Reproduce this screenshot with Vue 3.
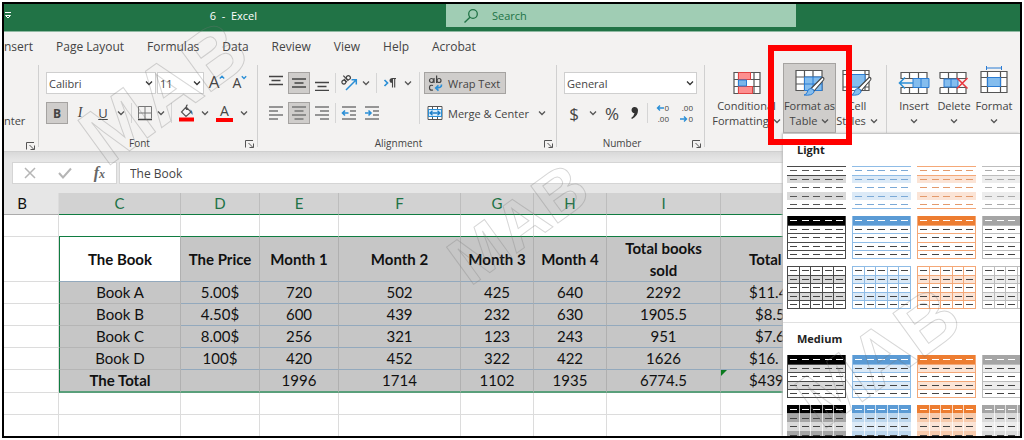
<script setup>
const tabs = ['nsert', 'Page Layout', 'Formulas', 'Data', 'Review', 'View', 'Help', 'Acrobat']

const columns = [
  { name: 'B', cls: 'cb' },
  { name: 'C', cls: 'cc' },
  { name: 'D', cls: 'cd' },
  { name: 'E', cls: 'cd' },
  { name: 'F', cls: 'cc' },
  { name: 'G', cls: 'cg' },
  { name: 'H', cls: 'cg' },
  { name: 'I', cls: 'ci' },
  { name: '', cls: 'cj' }
]

const heads = ['The Book', 'The Price', 'Month 1', 'Month 2', 'Month 3', 'Month 4', 'Total books sold', 'Total']

const books = [
  ['Book A', '5.00$', '720', '502', '425', '640', '2292', '$11.4'],
  ['Book B', '4.50$', '600', '439', '232', '630', '1905.5', '$8.5'],
  ['Book C', '8.00$', '256', '321', '123', '243', '951', '$7.6'],
  ['Book D', '100$', '420', '452', '322', '422', '1626', '$16.'],
  ['The Total', '', '1996', '1714', '1102', '1935', '6774.5', '$439']
]

const palette = [
  { name: 'Black', main: '#000000', line: '#4a4a4a', soft: '#d9d9d9', mid: '#a6a6a6', dash: '#555555' },
  { name: 'Blue', main: '#5b9bd5', line: '#8fbce6', soft: '#dceaf7', mid: '#bdd7ee', dash: '#7ba9d6' },
  { name: 'Orange', main: '#ed7d31', line: '#f4a878', soft: '#fbe4d6', mid: '#f8cbad', dash: '#e39a6c' },
  { name: 'Gray', main: '#a5a5a5', line: '#bdbdbd', soft: '#ededed', mid: '#dbdbdb', dash: '#aaaaaa' }
]

const sections = [
  { title: 'Light', kinds: ['lines', 'boxed', 'grid'] },
  { title: 'Medium', kinds: ['banded', 'tiled'] }
]

const rowsY = [0, 9, 17, 26, 34]
const solid = (k) => k === 'boxed' || k === 'banded' || k === 'tiled'

function bandFill(kind, c, r) {
  if (r === 0) return solid(kind) ? c.main : '#ffffff'
  if (kind === 'boxed') return '#ffffff'
  if (kind === 'tiled') return r % 2 ? c.mid : c.soft
  return r % 2 ? c.soft : '#ffffff'
}
function dashColor(kind, c, r) {
  if (r === 0 && solid(kind)) return '#ffffff'
  return kind === 'lines' ? c.dash : '#444444'
}
</script>

<template>
  <main class="window">
    <header class="titlebar">
      <div class="title">
        <svg class="qat" width="8" height="9" viewBox="0 0 8 9"><path d="M1 1.500h6M1.500 4.500 4 7l2.500-2.500z" fill="none" stroke="#fff" /></svg>
        <span>6&nbsp; - &nbsp;Excel</span>
      </div>
      <label class="search">
        <svg width="16" height="16" viewBox="0 0 16 16"><circle cx="10" cy="6" r="4.300" fill="none" stroke="#217346" stroke-width="1.300" /><path d="M7 9.200 1.500 14.500" stroke="#217346" stroke-width="1.400" /></svg>
        <input type="text" placeholder="Search" aria-label="Search" />
      </label>
    </header>

    <nav class="tabs">
      <a v-for="t in tabs" :key="t" href="#">{{ t }}</a>
    </nav>

    <section class="ribbon">
      <div class="group clip">
        <div class="painter">nter</div>
        <footer><span></span><svg class="launch" viewBox="0 0 10 10"><path d="M.5 8.500V1.500H8M3.500 4l4.500 4.500M8.500 4.500v4h-4" /></svg></footer>
      </div>

      <div class="group font">
        <div class="bar top">
          <span class="combo family"><select aria-label="Font"><option>Calibri</option></select><svg class="chev" viewBox="0 0 8 6"><path d="M1 1.500 4 4.500l3-3" /></svg></span>
          <span class="combo size"><select aria-label="Font size"><option>11</option></select><svg class="chev" viewBox="0 0 8 6"><path d="M1 1.500 4 4.500l3-3" /></svg></span>
          <button class="w24 grow" aria-label="Increase font size">A<svg width="6" height="5" viewBox="0 0 6 5"><path d="M.8 3.500 3 1.300l2.200 2.200" fill="none" stroke="#2b8fd6" stroke-width="1.400" /></svg></button>
          <button class="w20 shrink" aria-label="Decrease font size">A<svg width="6" height="5" viewBox="0 0 6 5"><path d="M.8 1.200 3 3.400l2.200-2.200" fill="none" stroke="#2b8fd6" stroke-width="1.400" /></svg></button>
        </div>
        <div class="bar">
          <button class="w22 on"><b>B</b></button>
          <button class="w22"><i>I</i></button>
          <button class="w22"><u>U</u></button>
          <button class="w12" aria-label="Underline options"><svg class="chev" viewBox="0 0 8 6"><path d="M1 1.500 4 4.500l3-3" /></svg></button>
          <hr />
          <button class="w18" aria-label="Borders"><svg width="16" height="16" viewBox="0 0 16 16"><path d="M1.500 1.500h13v12M1.500 1.500v12M8 2v12M2 8h12" fill="none" stroke="#777" /><path d="M1 14.500h14" stroke="#444" stroke-width="1.500" /></svg></button>
          <button class="w12" aria-label="Border options"><svg class="chev" viewBox="0 0 8 6"><path d="M1 1.500 4 4.500l3-3" /></svg></button>
          <hr />
          <button class="w22" aria-label="Fill color"><svg width="18" height="18" viewBox="0 0 18 18"><path d="M8 3 13 8 8 12.500 3.500 8zM8.500 6V2q0-1 1.200-1" fill="#f7f7f7" stroke="#555" stroke-width="1.200" /><path d="M12 5.500q3 1 2.500 5.500-2-2-1.500-3.500z" fill="#2b6ca3" /><path d="M1 13.500h15v4H1z" fill="#f00" /></svg></button>
          <button class="w12" aria-label="Fill options"><svg class="chev" viewBox="0 0 8 6"><path d="M1 1.500 4 4.500l3-3" /></svg></button>
          <button class="w24 ink" aria-label="Font color">A</button>
          <button class="w12" aria-label="Font color options"><svg class="chev" viewBox="0 0 8 6"><path d="M1 1.500 4 4.500l3-3" /></svg></button>
        </div>
        <footer><span>Font</span><svg class="launch" viewBox="0 0 10 10"><path d="M.5 8.500V1.500H8M3.500 4l4.500 4.500M8.500 4.500v4h-4" /></svg></footer>
      </div>

      <div class="group align">
        <div class="pair">
          <div class="stack">
            <div class="bar top">
              <button class="w22" aria-label="Top align"><svg class="ln" viewBox="0 0 16 16"><path d="M1 1.500h14M3.500 5.500h9M1 9.500h14" /></svg></button>
              <button class="w22 on" aria-label="Middle align"><svg class="ln" viewBox="0 0 16 16"><path d="M1 4h14M3.500 8h9M1 12h14" /></svg></button>
              <button class="w22" aria-label="Bottom align"><svg class="ln" viewBox="0 0 16 16"><path d="M1 7.500h14M3.500 11.500h9M1 15.500h14" /></svg></button>
              <hr class="tight" />
              <button class="w20" aria-label="Orientation"><svg width="18" height="18" viewBox="0 0 18 18"><g transform="rotate(-45 6 6)" fill="none" stroke="#444" stroke-width="1.200"><circle cx="3" cy="6" r="2" /><path d="M5.200 3.800v4.400M7.200 1v7.200" /><circle cx="9.300" cy="6" r="2" /></g><path d="M6 16 16 6M11.500 5.700H16.300V10.500" fill="none" stroke="#2b8fd6" stroke-width="1.500" /></svg></button>
              <button class="w12" aria-label="Orientation options"><svg class="chev" viewBox="0 0 8 6"><path d="M1 1.500 4 4.500l3-3" /></svg></button>
              <hr />
              <button class="w18" aria-label="Text direction"><svg width="14" height="12" viewBox="0 0 14 12"><path d="M1.500 3 4.500 6l-3 3" fill="none" stroke="#2b8fd6" stroke-width="1.700" /><path d="M9.500 1.500v9M11.700 1.500v9M13 1.500H9" fill="none" stroke="#444" stroke-width="1.100" /><path d="M9.500 1Q6.500 1 6.500 3.500T9.500 6z" fill="#444" /></svg></button>
              <button class="w16" aria-label="Direction options"><svg class="chev" viewBox="0 0 8 6"><path d="M1 1.500 4 4.500l3-3" /></svg></button>
            </div>
            <div class="bar">
              <button class="w22" aria-label="Align left"><svg class="ln dim" viewBox="0 0 16 16"><path d="M1 2h14M1 6h9M1 10h14M1 14h9" /></svg></button>
              <button class="w22 on" aria-label="Center"><svg class="ln dim" viewBox="0 0 16 16"><path d="M1 2h14M3.500 6h9M1 10h14M3.500 14h9" /></svg></button>
              <button class="w22" aria-label="Align right"><svg class="ln dim" viewBox="0 0 16 16"><path d="M1 2h14M6 6h9M1 10h14M6 14h9" /></svg></button>
              <hr class="tight" />
              <button class="w20" aria-label="Decrease indent"><svg class="ln dim" viewBox="0 0 16 16"><path d="M1 2h14M9 6h6M9 10h6M1 14h14" /><path class="blue" d="M7.500 8H1.500M4 5.500 1.500 8 4 10.500" /></svg></button>
              <button class="w24" aria-label="Increase indent"><svg class="ln dim" viewBox="0 0 16 16"><path d="M1 2h14M9 6h6M9 10h6M1 14h14" /><path class="blue" d="M1 8h6M4.500 5.500 7 8 4.500 10.500" /></svg></button>
            </div>
          </div>
          <div class="stack wide">
            <button class="wrap on"><svg width="15" height="17" viewBox="0 0 15 17"><g fill="none" stroke="#444" stroke-width="1.200"><circle cx="3.500" cy="5.500" r="2" /><path d="M6 3v5M8.600.5V8" /><circle cx="11" cy="5.500" r="2" /><path d="M5 10.500Q1.500 9.500 1.500 12.700T5 15" /></g><path d="M13.500 9.500Q14 13 8 13M10.500 10.300 7.700 13l2.800 2.700" fill="none" stroke="#2b8fd6" stroke-width="1.600" /></svg>Wrap Text</button>
            <button class="merge"><svg width="16" height="16" viewBox="0 0 16 16"><path d="M1 1.500h14v13H1zM1 4.500h14M1 11.500h14M5.500 1v3.500M10.500 1v3.500M5.500 11.500V15M10.500 11.500V15" fill="#fff" stroke="#555" /><path d="M1.500 4.500h13v7h-13z" fill="#d9ecfa" stroke="#2b8fd6" /><path d="M3 8h10M5.500 5.700 3 8l2.500 2.300M10.500 5.700 13 8l-2.500 2.300" fill="none" stroke="#1e7fc9" stroke-width="1.300" /></svg>Merge &amp; Center<svg class="chev" viewBox="0 0 8 6"><path d="M1 1.500 4 4.500l3-3" /></svg></button>
          </div>
        </div>
        <footer><span>Alignment</span><svg class="launch" viewBox="0 0 10 10"><path d="M.5 8.500V1.500H8M3.500 4l4.500 4.500M8.500 4.500v4h-4" /></svg></footer>
      </div>

      <div class="group number">
        <div class="bar top">
          <span class="combo format"><select aria-label="Number format"><option>General</option></select><svg class="chev" viewBox="0 0 8 6"><path d="M1 1.500 4 4.500l3-3" /></svg></span>
        </div>
        <div class="bar">
          <button class="w20 sign">$</button>
          <button class="w16" aria-label="Currency options"><svg class="chev" viewBox="0 0 8 6"><path d="M1 1.500 4 4.500l3-3" /></svg></button>
          <button class="w20 sign">%</button>
          <button class="w22" aria-label="Comma style"><svg width="9" height="14" viewBox="0 0 9 14"><path d="M4 1a3.300 3.300 0 0 1 4 3.500Q8 10 2 13l-.8-1Q4 10 4.500 7.300A3.200 3.200 0 0 1 4 1z" fill="#333" /></svg></button>
          <hr class="tight" />
          <button class="w18 dec"><svg width="8" height="8" viewBox="0 0 8 8"><path d="M8 4H1.500M4 1.500 1.500 4 4 6.500" fill="none" stroke="#2b8fd6" stroke-width="1.400" /></svg><span>0</span><span class="full">.00</span></button>
          <button class="w18 dec next"><span class="full">.00</span><svg width="8" height="8" viewBox="0 0 8 8"><path d="M0 4h6.500M4 1.500 6.500 4 4 6.500" fill="none" stroke="#2b8fd6" stroke-width="1.400" /></svg><span>0</span></button>
        </div>
        <footer><span>Number</span><svg class="launch" viewBox="0 0 10 10"><path d="M.5 8.500V1.500H8M3.500 4l4.500 4.500M8.500 4.500v4h-4" /></svg></footer>
      </div>

      <div class="group styles">
        <button class="big cond">
          <svg width="28" height="24" viewBox="0 0 28 24"><path d="M1 1.500h26v21H1zM1 8.500h26M1 15.500h26M5.500 1.500v21M21 1.500v21" fill="#fff" stroke="#555" stroke-width="1.200" /><path d="M5.500 1.500h12v7h-12zM5.500 15.500h14v7h-14z" fill="#fd8f8f" stroke="#e04343" /><path d="M5.500 9h8v6h-8z" fill="#7ab6ea" stroke="#2b7cd3" /></svg>
          <span>Conditional</span><span>Formatting<svg class="chev" viewBox="0 0 8 6"><path d="M1 1.500 4 4.500l3-3" /></svg></span>
        </button>
        <button class="big fat on">
          <svg width="30" height="28" viewBox="0 0 30 28"><path d="M1 1.500h26v20H1zM1 8h26M1 15h26M9.500 1.500v20M18 1.500v20" fill="#fff" stroke="#555" stroke-width="1.200" /><path d="M9.500 8H27v13.500H9.500z" fill="#84bdee" stroke="#2b7cd3" /><path d="M9.500 15H27M18 8v13.500" stroke="#2b7cd3" /><path d="M28 8.500q1.500 1 .5 2.500L19 22l-3-2.500L26.500 9q.8-.9 1.500-.5z" fill="#fff" stroke="#444" stroke-width="1.100" /><path d="M16 19.500q3.500.5 3 3.500-2 4-10 3 3-.8 3.300-3 .7-3.500 3.700-3.500z" fill="#84bdee" stroke="#2b7cd3" /></svg>
          <span>Format as</span><span>Table<svg class="chev" viewBox="0 0 8 6"><path d="M1 1.500 4 4.500l3-3" /></svg></span>
        </button>
        <button class="big cell">
          <svg width="30" height="28" viewBox="0 0 30 28"><path d="M1 1.500h26v20H1zM1 5.500h26M1 18h26M5 1.500v20M23 1.500v20" fill="#fff" stroke="#555" stroke-width="1.200" /><path d="M5 5.500h18V18H5z" fill="#84bdee" stroke="#2b7cd3" /><path d="M28 8.500q1.500 1 .5 2.500L19 22l-3-2.500L26.500 9q.8-.9 1.500-.5z" fill="#fff" stroke="#444" stroke-width="1.100" /><path d="M16 19.500q3.500.5 3 3.500-2 4-10 3 3-.8 3.300-3 .7-3.500 3.700-3.500z" fill="#84bdee" stroke="#2b7cd3" /></svg>
          <span>Cell</span><span>Styles<svg class="chev" viewBox="0 0 8 6"><path d="M1 1.500 4 4.500l3-3" /></svg></span>
        </button>
      </div>

      <div class="group cells">
        <button class="big">
          <svg width="32" height="24" viewBox="0 0 32 24"><path d="M3 1.500h26v21H3zM3 7.500h26M3 16.500h26M11.500 1.500v21M20.500 1.500v21" fill="#fff" stroke="#555" stroke-width="1.200" /><path d="M2 8h29v8H2z" fill="#f3f2f1" /><path d="M15 7.500h16v9H15zM23 7.500v9" fill="#84bdee" stroke="#2b7cd3" /><path d="M15 12H2M7 6.500 1.500 12 7 17.500" fill="none" stroke="#2b8fd6" stroke-width="1.600" /></svg>
          <span>Insert</span><svg class="chev" viewBox="0 0 8 6"><path d="M1 1.500 4 4.500l3-3" /></svg>
        </button>
        <button class="big">
          <svg width="30" height="24" viewBox="0 0 30 24"><path d="M1 7.500v-6h26v6M1 16.500v6h26v-6M1 7.500h26M1 16.500h26M9.500 1.500v6M18 1.500v6M9.500 16.500v6M18 16.500v6" fill="#fff" stroke="#555" stroke-width="1.200" /><path d="M5 8h14v8H5zM12 8v8" fill="#84bdee" stroke="#2b7cd3" /><path d="M18 7 28.500 17.500M28.500 7 18 17.500" stroke="#e8383f" stroke-width="1.600" /></svg>
          <span>Delete</span><svg class="chev" viewBox="0 0 8 6"><path d="M1 1.500 4 4.500l3-3" /></svg>
        </button>
        <button class="big tall">
          <svg width="28" height="28" viewBox="0 0 28 28"><path d="M1 5.500h26v21H1zM1 11.500h26M1 20.500h26M7.500 5.500v21M20.500 5.500v21" fill="#fff" stroke="#555" stroke-width="1.200" /><path d="M7.500 11.500h13v9h-13z" fill="#84bdee" stroke="#2b7cd3" stroke-width="1.200" /><path d="M7 2h14M6.500 0v4M21.500 0v4" stroke="#2b7cd3" /></svg>
          <span>Format</span><svg class="chev" viewBox="0 0 8 6"><path d="M1 1.500 4 4.500l3-3" /></svg>
        </button>
      </div>
    </section>

    <section class="formula">
      <div class="tools">
        <button aria-label="Cancel"><svg width="12" height="12" viewBox="0 0 12 12"><path d="M1 1l10 10M11 1 1 11" stroke="#b5b5b5" stroke-width="1.500" /></svg></button>
        <button aria-label="Enter"><svg width="14" height="12" viewBox="0 0 14 12"><path d="M1 6l4 4.500L13 1.500" fill="none" stroke="#b5b5b5" stroke-width="2" /></svg></button>
        <button class="fx"><i>f<small>x</small></i></button>
      </div>
      <input type="text" value="The Book" aria-label="Formula" />
    </section>

    <table class="sheet">
      <thead>
        <tr><th v-for="(c, i) in columns" :key="i" :class="[c.cls, { sel: i > 0 }]">{{ c.name }}</th></tr>
      </thead>
      <tbody>
        <tr class="blank above"><td v-for="n in 9" :key="n"></td></tr>
        <tr class="heading">
          <td></td>
          <th v-for="(h, i) in heads" :key="h" :class="{ active: i === 0, first: i === 0, money: i === 7 }">{{ h }}</th>
        </tr>
        <tr v-for="(b, r) in books" :key="b[0]" :class="{ last: r === 4 }">
          <td></td>
          <td v-for="(v, i) in b" :key="i" class="s" :class="{ first: i === 0, money: i === 7, brief: i === 7 &amp;&amp; (r === 1 || r === 2) }">{{ v }}<svg v-if="r === 4 && i === 7" class="flag" viewBox="0 0 6 6"><path d="M0 0h6L0 6z" fill="#0a7a1e" /></svg></td>
        </tr>
        <tr v-for="n in 2" :key="'e' + n" class="blank"><td v-for="m in 9" :key="m"></td></tr>
      </tbody>
    </table>

    <aside class="gallery">
      <section v-for="s in sections" :key="s.title">
        <h2>{{ s.title }}</h2>
        <div v-for="k in s.kinds" :key="k" class="swatches">
          <button v-for="c in palette" :key="c.name" :aria-label="c.name + ' ' + k">
            <svg width="59" height="44" viewBox="0 0 59 44" shape-rendering="crispEdges">
              <rect v-for="(y, r) in rowsY" :key="'f' + r" x="0" :y="y" width="59" height="9" :fill="bandFill(k, c, r)" />
              <g v-if="k === 'lines'" :fill="c.line"><rect width="59" height="1" /><rect y="9" width="59" height="1" /><rect y="42" width="59" height="1" /></g>
              <g v-else-if="k !== 'tiled'" :fill="c.line">
                <rect v-for="y in [9, 17, 26, 34, 42]" :key="y" :y="y" width="59" height="1" />
                <rect width="59" height="1" :fill="solid(k) ? c.main : c.line" /><rect width="1" height="43" /><rect x="58" width="1" height="43" />
                <template v-if="k === 'grid'"><rect v-for="x in [12, 23, 35, 46]" :key="'v' + x" :x="x" width="1" height="43" /></template>
              </g>
              <g v-else fill="#fff">
                <rect v-for="x in [12, 23, 35, 46]" :key="'v' + x" :x="x" width="1" height="43" opacity=".7" /><rect y="8" width="59" height="1" opacity=".6" />
              </g>
              <template v-for="(y, r) in rowsY" :key="'r' + r">
                <rect v-for="x in [3, 15, 26, 38, 49]" :key="x" :x="x" :y="y + 4" width="7" height="1" :fill="dashColor(k, c, r)" />
              </template>
            </svg>
          </button>
        </div>
      </section>
    </aside>

    <svg class="mark" aria-hidden="true">
      <text transform="translate(106 168) rotate(-36)" font-size="80">MAB</text>
      <text transform="translate(470 287) rotate(-36)" font-size="67">MAB</text>
      <text transform="translate(822 431) rotate(-36)" font-size="78">MAB</text>
    </svg>
    <div class="callout"></div>
  </main>
</template>

<style>
body { background: #fff; }
</style>

<style scoped>
* { box-sizing: border-box; }
.window {
  position: relative;
  margin: 2px;
  height: calc(100vh - 4px);
  border: 2px solid #000;
  overflow: hidden;
  background: #fff;
  color: #444;
  font: 11px/15px "Open Sans", "Noto Sans", sans-serif;
}
button, input, select { font: inherit; color: inherit; margin: 0; padding: 0; border: 0; background: none; }
button { display: flex; align-items: center; justify-content: center; }
svg { flex: none; display: block; }

.titlebar { display: flex; height: 28px; background: #217346; color: #fff; border-bottom: 1px solid #8fb9a2; }
.title { display: flex; flex: 0 0 442px; align-items: center; justify-content: space-between; height: 23px; padding-right: 189px; }
.search { display: flex; align-items: center; gap: 13px; width: 350px; height: 23px; padding-left: 17px; background: #a0cdb4; color: #217346; }
.search input::placeholder { color: #217346; opacity: 1; }

.tabs { display: flex; gap: 23px; align-items: center; height: 31px; background: #f3f2f1; font-size: 12px; padding-bottom: 2px; }
.tabs a { color: #444; text-decoration: none; white-space: nowrap; }

.ribbon { display: flex; height: 88px; background: #f3f2f1; }
.group { position: relative; display: flex; flex-direction: column; flex: none; padding-top: 9px; }
.group::after { content: ""; position: absolute; right: 0; top: 2px; bottom: 4px; width: 1px; background: #d0d0d0; }
.clip { width: 35px; }
.painter { margin-top: 41px; }
.font { width: 219px; padding-left: 7px; }
.align { width: 299px; padding-left: 7px; }
.number { width: 148px; padding-left: 7px; }
.styles { width: 182px; flex-direction: row; padding: 0 0 0 5px; }
.cells { flex: 1; flex-direction: row; padding: 0 0 0 7px; }
.cells::after { display: none; }
.bar { display: flex; align-items: center; height: 22px; gap: 1px; }
.bar.top { margin-bottom: 8px; }
.pair { display: flex; }
.stack.wide { display: flex; flex-direction: column; align-items: flex-start; gap: 8px; margin-left: 3px; padding-left: 4px; border-left: 1px solid #d5d5d5; }
.group footer { display: grid; grid-template-columns: 1fr 18px; align-items: center; text-align: center; font-size: 10px; margin-top: auto; }
.font footer, .align footer, .number footer { margin-left: -7px; }
.launch { width: 10px; height: 10px; margin-left: 5px; fill: none; stroke: #555; }
hr { width: 1px; height: 20px; border: 0; margin: 0 3px; background: #d5d5d5; }
hr.tight { margin: 0 2px 0 1px; }
.w12 { width: 12px; } .w16 { width: 16px; } .w18 { width: 18px; } .w20 { width: 20px; } .w22 { width: 22px; } .w24 { width: 24px; }
.bar button { height: 22px; }
.on { background: #cfcdcb; box-shadow: inset 0 0 0 1px #a5a3a1; }
.chev { width: 8px; height: 6px; fill: none; stroke: #555; stroke-width: 1.300; }
.combo { position: relative; display: flex; align-items: center; height: 22px; background: #fff; border: 1px solid #cfcfcf; }
.combo select { appearance: none; width: 100%; height: 20px; padding-left: 2px; }
.combo .chev { position: absolute; right: 2px; pointer-events: none; stroke: #333; }
.family { width: 110px; } .size { width: 47px; } .format { width: 133px; }
.grow, .shrink { align-items: flex-start; }
.grow { font-size: 17px; line-height: 20px; }
.shrink { font-size: 14px; line-height: 22px; }
.grow svg, .shrink svg { margin-top: 3px; }
.bar b { font-size: 12px; } .bar i { font: italic 14px "Liberation Serif", serif; } .bar u { font-size: 13px; }
.ink { font-size: 14px; line-height: 14px; }
.bar .ink { height: 18px; width: 17px; margin: 0 4px; border-bottom: 4px solid #f00; }
.ln { width: 16px; height: 16px; fill: none; stroke: #444; stroke-width: 1.400; }
.ln.dim { stroke: #777; }
.ln .blue { stroke: #2b8fd6; stroke-width: 1.600; }
.wrap, .merge { gap: 5px; height: 22px; padding: 0 6px 0 4px; white-space: nowrap; }
.merge { padding-left: 3px; }
.merge .chev { margin-left: 4px; }
.sign { font-size: 17px; }
.dec { display: flex; flex-wrap: wrap; align-content: center; justify-content: flex-end; font-size: 8px; line-height: 11px; }
.dec .full { width: 100%; text-align: right; }
.dec .full + svg { margin-left: auto; }
.next { margin-left: 5px; }
.big { flex-direction: column; justify-content: flex-start; width: 40px; height: 70px; padding-top: 6px; white-space: nowrap; }
.big > svg:first-child { height: 28px; margin-bottom: 1px; }
.big span { display: flex; align-items: center; gap: 4px; }
.big > .chev { margin-top: 5px; }
.cond { width: 73px; } .fat { width: 53px; } .cell { width: 42px; }
.tall { padding-top: 3px; }
.tall > svg:first-child { margin-bottom: 4px; }

.formula { display: flex; gap: 2px; height: 42px; padding: 10px 0 9px 8px; border-top: 1px solid #cfcfcf; background: linear-gradient(#d9d9d9, #e6e6e6 8px); }
.tools { display: flex; justify-content: space-around; width: 105px; background: #fff; border: 1px solid #d5d5d5; }
.fx i { font: italic bold 16px "Liberation Serif", serif; color: #666; }
.fx small { font-size: 12px; }
.formula input { flex: 1; min-width: 0; padding-left: 10px; background: #fff; border: 1px solid #d5d5d5; font-size: 12px; }

.sheet { width: 100%; table-layout: fixed; border-collapse: separate; border-spacing: 0; color: #111; font: 15px/22px Lato, "Open Sans", sans-serif; text-align: center; }
.sheet th, .sheet td { height: 22px; padding: 0; line-height: 21px; border: solid #dcdcdc; border-width: 0 1px 1px 0; white-space: nowrap; }
.sheet thead th { background: #e6e6e6; font-weight: 400; border-right-color: #bdbdbd; border-bottom-color: #ababab; }
.sheet thead .cb { padding-right: 18px; border-right-color: #dcdcdc; }
.sheet thead .sel { background: #d2d2d2; color: #217346; border-bottom-color: #107c41; }
.cb { width: 55px; } .cc { width: 122px; } .cd { width: 79px; } .cg { width: 73px; } .ci { width: 114px; }
.sheet .above td:not(:first-child) { border-bottom-color: #107c41; }
.sheet .heading th { height: 45px; line-height: 22px; padding: 0 4px; white-space: normal; font-weight: 700; background: #c6c6c6; border-color: #b0b0b0; border-bottom-color: #93a9bd; }
.sheet .heading th.active { background: #fff; }
.sheet .s { position: relative; background: #c6c6c6; border-color: #b0b0b0; border-bottom-color: #93a9bd; }
.sheet .heading th.first, .sheet .s.first { border-left: 1px solid #107c41; }
.sheet .s.first { border-bottom-color: #b5b5b5; }
.sheet .last .s { border-bottom: 2px solid #5a9f7b; }
.sheet .last .first { font-weight: 700; }
.sheet tbody .money { text-align: left; padding-left: 28px; }
.sheet tbody .brief { padding-left: 34px; }
.flag { position: absolute; left: 0; top: 0; width: 6px; height: 6px; }

.gallery { position: absolute; left: 779px; right: 0; top: 129px; bottom: 0; overflow: hidden; background: #fff; border-top: 1px solid #c6c6c6; box-shadow: -1px 0 2px #bbb; }
.gallery section { padding: 8px 0 12px 4px; border-bottom: 1px solid #e0e0e0; }
.gallery h2 { margin: 0 0 9px; padding-left: 10px; font-size: 11px; line-height: 15px; font-weight: 700; color: #222; }
.swatches { display: flex; gap: 6px; margin-bottom: 6px; }
.swatches:last-child { margin-bottom: 0; }

.mark { position: absolute; left: -4px; top: -4px; width: 1024px; height: 440px; pointer-events: none; fill: none; stroke: #777; stroke-opacity: .3; font-family: "Liberation Sans Narrow", "Liberation Sans", sans-serif; font-weight: 700; }
.callout { position: absolute; left: 764px; top: 41px; width: 84px; height: 100px; border: 6px solid #f00; pointer-events: none; }
</style>
